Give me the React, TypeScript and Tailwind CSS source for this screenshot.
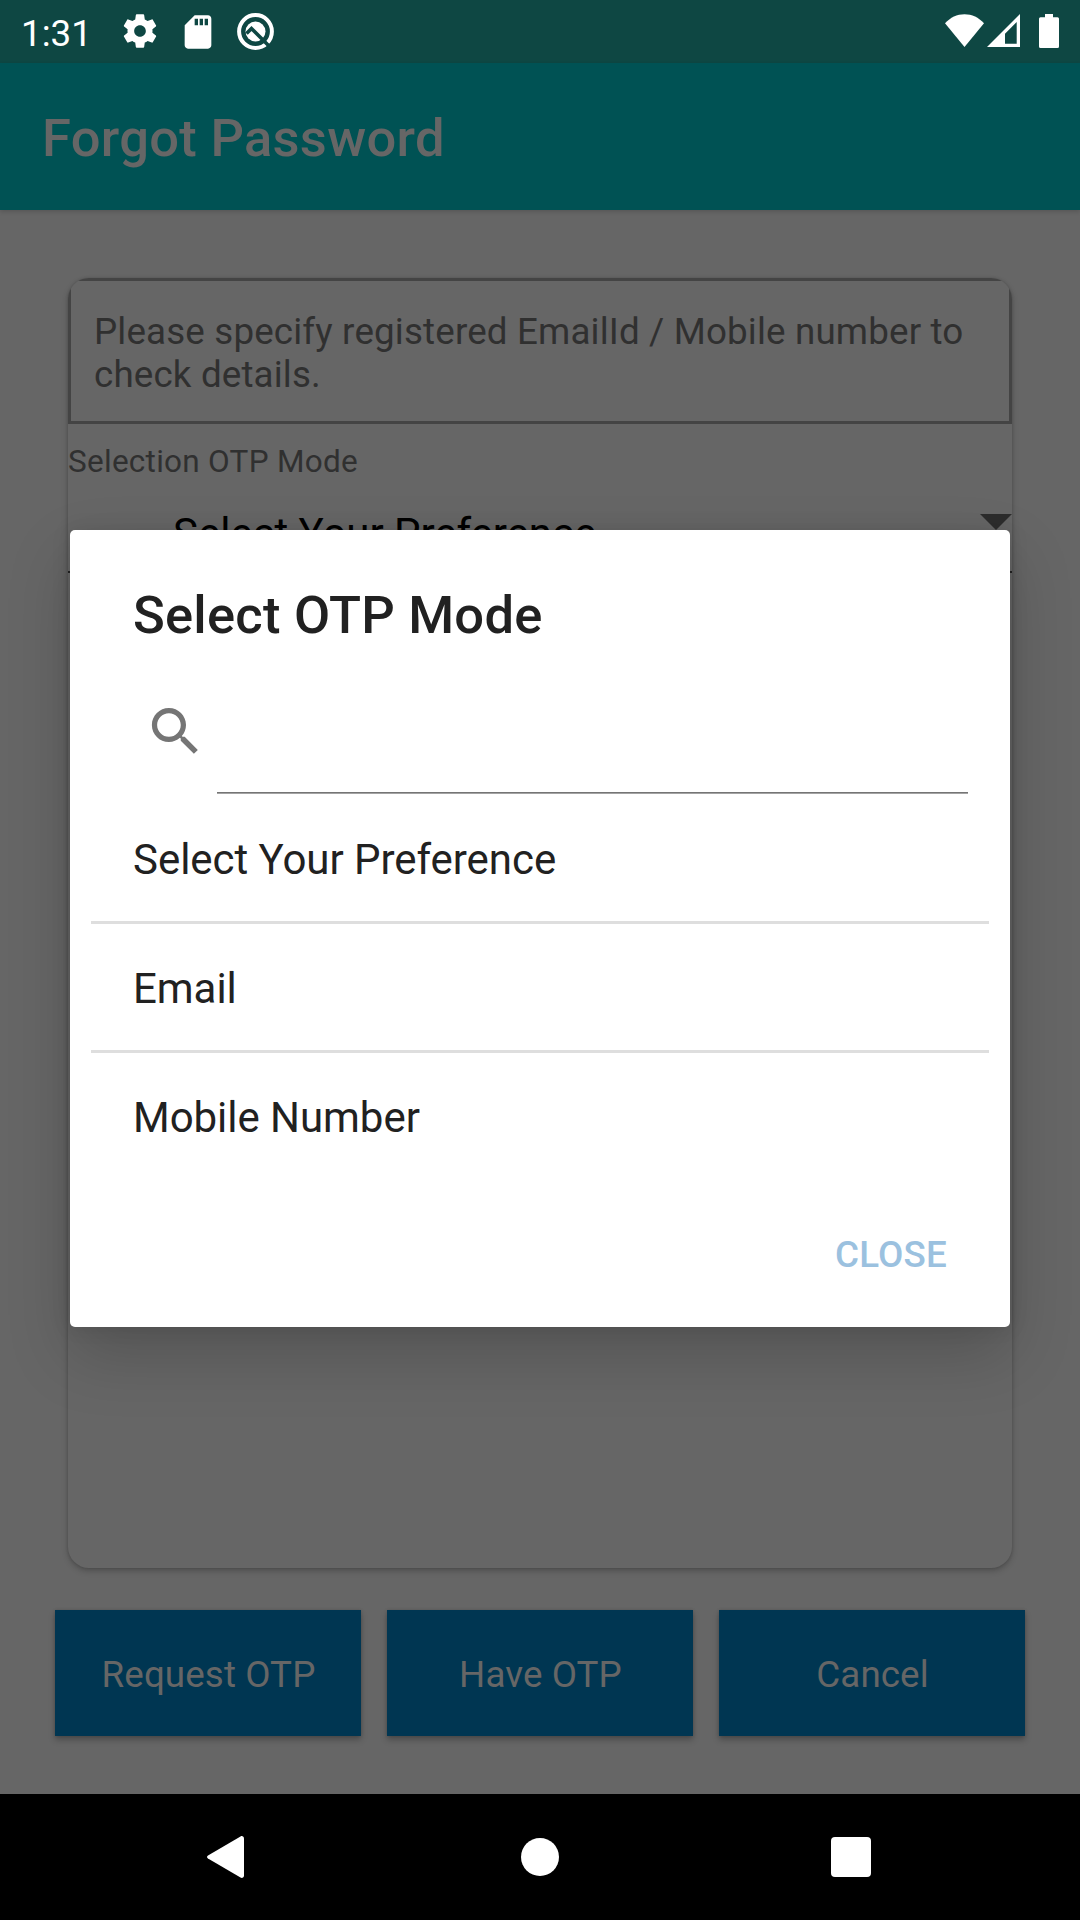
const options = ['Select Your Preference', 'Email', 'Mobile Number']
const actions = ['Request OTP', 'Have OTP', 'Cancel']

function StatusBar() {
    return (
        <div className="flex h-[63px] items-start justify-between bg-[#0e4743]">
            <div className="flex items-start pl-[21px]">
                <span className="mt-[12px] w-[70px] text-[36.75px] leading-[43px] text-white">
                    1:31
                </span>
                {/* Settings */}
                <svg
                    className="mt-[11px] ml-[28.5px] size-[40px] fill-white"
                    viewBox="0 0 24 24"
                >
                    <path d="M19.43 12.98c.04-.32.07-.64.07-.98s-.03-.66-.07-.98l2.11-1.65c.19-.15.24-.42.12-.64l-2-3.46c-.12-.22-.39-.3-.61-.22l-2.49 1c-.52-.4-1.08-.73-1.69-.98l-.38-2.65C14.46 2.18 14.25 2 14 2h-4c-.25 0-.46.18-.49.42l-.38 2.65c-.61.25-1.17.59-1.69.98l-2.49-1c-.23-.09-.49 0-.61.22l-2 3.46c-.13.22-.07.49.12.64l2.11 1.65c-.04.32-.07.65-.07.98s.03.66.07.98l-2.11 1.65c-.19.15-.24.42-.12.64l2 3.46c.12.22.39.3.61.22l2.49-1c.52.4 1.08.73 1.69.98l.38 2.65c.03.24.24.42.49.42h4c.25 0 .46-.18.49-.42l.38-2.65c.61-.25 1.17-.59 1.69-.98l2.49 1c.23.09.49 0 .61-.22l2-3.46c.12-.22.07-.49-.12-.64l-2.11-1.65zM12 15.5c-1.93 0-3.5-1.57-3.5-3.5s1.57-3.5 3.5-3.5 3.5 1.57 3.5 3.5-1.57 3.5-3.5 3.5z" />
                </svg>
                {/* SD card */}
                <svg
                    className="mt-[11.5px] ml-[18.5px] size-[40px] fill-white"
                    viewBox="0 0 24 24"
                >
                    <path d="M18 2h-8L4.02 8 4 20c0 1.1.9 2 2 2h12c1.1 0 2-.9 2-2V4c0-1.1-.9-2-2-2zm-6 6h-2V4h2v4zm3 0h-2V4h2v4zm3 0h-2V4h2v4z" />
                </svg>
                {/* Android Q */}
                <svg
                    className="mt-[13px] ml-[19px] h-[37px] w-[37px]"
                    viewBox="0 0 37 37"
                    fill="none"
                >
                    <circle
                        cx="18.5"
                        cy="18.5"
                        r="16.4"
                        stroke="#fff"
                        strokeWidth="4"
                    />
                    <circle cx="18.5" cy="18.5" r="10" fill="#fff" />
                    <path
                        d="M9.5 20.5l5-5L31.5 32.5"
                        stroke="#0e4743"
                        strokeWidth="3.6"
                    />
                </svg>
            </div>
            <div className="flex items-start pr-[21px]">
                <svg
                    className="mt-[14px] h-[33px] w-[39px] fill-white"
                    viewBox="0 0 39 33"
                >
                    <path d="M19.5 33L0 9.2C5.4 3.4 12 .2 19.5 .2S33.6 3.4 39 9.2z" />
                </svg>
                <svg
                    className="mt-[14px] ml-[3px] h-[33px] w-[33px] fill-white"
                    viewBox="0 0 33 33"
                >
                    <path
                        fillRule="evenodd"
                        d="M33 0v33H0zM29.7 8L18 19.7v10.1h11.7z"
                    />
                </svg>
                <svg
                    className="mt-[14px] ml-[19px] h-[34px] w-[20px] fill-white"
                    viewBox="0 0 20 34"
                >
                    <path d="M6 0h8v3.3h4.5A1.5 1.5 0 0 1 20 4.8v27.7a1.5 1.5 0 0 1-1.5 1.5h-17A1.5 1.5 0 0 1 0 32.5V4.8a1.5 1.5 0 0 1 1.5-1.5H6z" />
                </svg>
            </div>
        </div>
    )
}

function ResetCard() {
    return (
        <div className="h-[1290px] overflow-hidden rounded-[21px] shadow-[0_3px_6px_rgba(0,0,0,0.22),0_0_3px_rgba(0,0,0,0.16)]">
            <p className="h-[146px] border-[3px] border-[#444] pt-[29px] pl-[23px] text-[36.75px] leading-[43px] tracking-[0.16px] text-[#303030]">
                Please specify registered EmailId / Mobile number to
                <br />
                check details.
            </p>
            <div className="mt-[19px] text-[31.5px] leading-[37px] tracking-[0.27px] text-[#303030]">
                Selection OTP Mode
            </div>
            <div className="mt-[29px] flex h-[64px] justify-between border-b-2 border-[#222] pl-[105px]">
                <span className="text-[42px] leading-[49px] tracking-[-0.04px] text-black">
                    Select Your Preference
                </span>
                <svg
                    className="mt-[5px] h-[16px] w-[32px] fill-[#2d2d2d]"
                    viewBox="0 0 32 16"
                >
                    <path d="M0 0h32L16 16z" />
                </svg>
            </div>
        </div>
    )
}

function OtpModeDialog() {
    return (
        <div className="absolute top-[530px] left-[70px] flex h-[797px] w-[940px] flex-col rounded-[5px] bg-white text-[#212121] shadow-[0_28px_64px_rgba(0,0,0,0.18),0_0_20px_rgba(0,0,0,0.1)]">
            <h2 className="mt-[54px] pl-[63px] text-[52.5px] leading-[62px] font-medium tracking-[0.22px]">
                Select OTP Mode
            </h2>
            <div className="flex h-[149px] items-start pt-[54px] pl-[74px]">
                <svg
                    className="size-[63px] fill-[#757575]"
                    viewBox="0 0 24 24"
                >
                    <path d="M15.5 14h-.8l-.3-.3c1-1.1 1.6-2.6 1.6-4.2C16 5.9 13.1 3 9.5 3S3 5.9 3 9.5 5.9 16 9.5 16c1.6 0 3.1-.6 4.2-1.6l.3.3v.8l5 5 1.5-1.5zm-6 0C7 14 5 12 5 9.5S7 5 9.5 5 14 7 14 9.5 12 14 9.5 14z" />
                </svg>
                <div className="ml-[10px] h-[93px] w-[751px] border-b border-[#757575] shadow-[0_1px_0_#a3a3a3]" />
            </div>
            <ul className="mx-[21px] divide-y-[3px] divide-[#dedede]">
                {options.map((option) => (
                    <li
                        key={option}
                        className="h-[129px] pt-[40px] pl-[42px] text-[42px] leading-[49px] tracking-[-0.04px]"
                    >
                        {option}
                    </li>
                ))}
            </ul>
            <button className="mt-[51px] mr-[63px] self-end text-[36.75px] leading-[43px] font-medium tracking-[0.2px] text-[#9bc1df]">
                CLOSE
            </button>
        </div>
    )
}

function NavigationBar() {
    return (
        <div className="flex h-[126px] items-center bg-black">
            <svg
                className="ml-[207px] h-[42px] w-[37px] fill-white"
                viewBox="0 0 37 42"
            >
                <path d="M33.5.4C35.2-.4 37 .6 37 2.5v37c0 1.9-1.8 2.9-3.5 2.1L1 22.5c-1.3-.8-1.3-2.2 0-3z" />
            </svg>
            <div className="ml-[277px] size-[38px] rounded-full bg-white" />
            <div className="ml-[272px] size-[40px] rounded-[4px] bg-white" />
        </div>
    )
}

export default function App() {
    return (
        <div className="relative flex h-[1920px] w-[1080px] flex-col overflow-hidden bg-[#666] font-['Roboto',sans-serif]">
            <StatusBar />
            <header className="flex h-[147px] items-center bg-[#005254] pt-[3px] pl-[42px] shadow-[0_2px_4px_rgba(0,0,0,0.15)]">
                <h1 className="text-[52.5px] leading-[62px] font-medium tracking-[0.3px] text-[#666]">
                    Forgot Password
                </h1>
            </header>
            <main className="h-[1584px] px-[68px] pt-[68px]">
                <ResetCard />
                <div className="-mx-[13px] mt-[42px] flex gap-[26px]">
                    {actions.map((action) => (
                        <button
                            key={action}
                            className="h-[126px] w-[306px] bg-[#003652] pt-[3px] pl-px text-[36.75px] tracking-[0.1px] text-[#666] shadow-[0_4px_6px_rgba(0,0,0,0.25),0_0_3px_rgba(0,0,0,0.15)]"
                        >
                            {action}
                        </button>
                    ))}
                </div>
            </main>
            <NavigationBar />
            <OtpModeDialog />
        </div>
    )
}
